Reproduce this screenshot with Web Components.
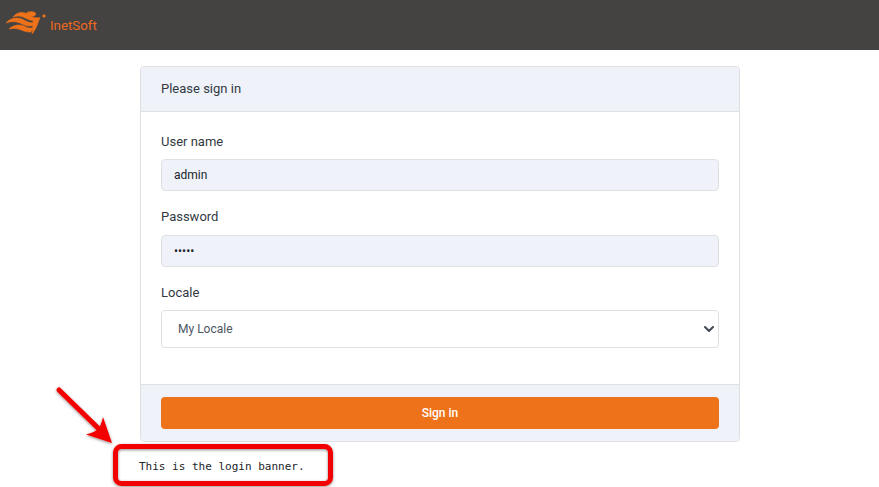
<!DOCTYPE html>
<html>
<head>
<meta charset="utf-8">
<title>Sign in</title>
<style>
  html, body { margin: 0; height: 100%; background: #fff; overflow: hidden; }
  body { font-family: Roboto, sans-serif; font-size: 13px; color: #212529; position: relative; }
</style>
</head>
<body>
<app-header></app-header>
<login-card>
  <form-field label="User name" type="text" value="admin"></form-field>
  <form-field label="Password" type="password" value="admin" style="--label-gap: 9px"></form-field>
  <locale-field label="Locale" value="My Locale"></locale-field>
</login-card>
<login-banner>This is the login banner.</login-banner>
<banner-callout></banner-callout>

<script>
class AppHeader extends HTMLElement {
    constructor() {
        super();
        this.attachShadow({ mode: 'open' });
        this.shadowRoot.innerHTML = `
            <style>
                :host {
                    display: flex;
                    align-items: center;
                    height: 50px;
                    background: #444341;
                    padding-left: 4px;
                    box-sizing: border-box;
                }
                svg { display: block; margin-top: -4px; }
                span {
                    margin-left: 3px;
                    color: #ee6a1f;
                    font-size: 13.3px;
                }
            </style>
            <svg width="43" height="26" viewBox="4 10 43 26">
                <g fill="#ee7219" stroke="#ee7219" stroke-width=".6">
                    <circle cx="44" cy="16" r="1.300"/>
                    <ellipse cx="31" cy="14" rx="4.700" ry="2.300"/>
                    <path d="M13 17C16 13 21 11.500 25 13C29 15 32 18 38 18L39 19.500C33 22 28 19.500 24 17.500C21 16 17 15.500 13 17z"/>
                    <path d="M6 23C10 18 17 17 22 19C26 21 30 24 35 22L33 25.500C28 27 24 25 20 23C16 21.500 11 21 6 23z"/>
                    <path d="M9 29C13 25 19 24 24 26C27 27.500 30 29 33 27.500L31 32C27 32.500 24 31 20 29.500C17 28.500 13 28 9 29z"/>
                    <path d="M33 19L40 17.500C38 22 37 28 32 34C33 29 33 24 33 19z"/>
                </g>
            </svg>
            <span>InetSoft</span>
        `;
    }
}

class LoginCard extends HTMLElement {
    constructor() {
        super();
        this.attachShadow({ mode: 'open' });
        this.shadowRoot.innerHTML = `
            <style>
                :host {
                    display: block;
                    width: 600px;
                    box-sizing: border-box;
                    margin: 16px 0 0 140px;
                    border: 1px solid #dfe0e2;
                    border-radius: 4px;
                    overflow: hidden;
                }
                .head {
                    height: 45px;
                    box-sizing: border-box;
                    padding: 0 20px 1px;
                    display: flex;
                    align-items: center;
                    background: #eff2f9;
                    border-bottom: 1px solid #dfe0e2;
                    color: #333a42;
                }
                .body {
                    height: 272px;
                    box-sizing: border-box;
                    padding: 19.500px 20px 0;
                    display: flex;
                    flex-direction: column;
                }
                .foot {
                    height: 57px;
                    box-sizing: border-box;
                    padding: 12px 20px 0;
                    background: #eff2f9;
                    border-top: 1px solid #dfe0e2;
                }
                button {
                    display: block;
                    width: 100%;
                    height: 32px;
                    border: 0;
                    border-radius: 4px;
                    background: #ee7219;
                    color: #fff;
                    font: 500 12px Roboto, sans-serif;
                    padding: 0;
                }
            </style>
            <div class="head">Please sign in</div>
            <div class="body"><slot></slot></div>
            <div class="foot"><button type="button">Sign in</button></div>
        `;
    }
}

class FormField extends HTMLElement {
    constructor() {
        super();
        this.attachShadow({ mode: 'open' });
    }

    connectedCallback() {
        const label = this.getAttribute('label');
        const type = this.getAttribute('type') || 'text';
        const value = this.getAttribute('value') || '';
        this.shadowRoot.innerHTML = `
            <style>
                :host { display: block; margin-bottom: 15.500px; }
                label {
                    display: block;
                    height: 19.500px;
                    line-height: 19.500px;
                    margin-bottom: var(--label-gap, 8px);
                    color: #333a42;
                }
                input {
                    display: block;
                    width: 100%;
                    height: 32px;
                    box-sizing: border-box;
                    padding: 0 12px;
                    background: #eff2f9;
                    border: 1px solid #dfe0e2;
                    border-radius: 4px;
                    color: #212529;
                    font: 12px Roboto, sans-serif;
                    outline: none;
                }
            </style>
            <label>${label}</label>
            <input type="${type}" value="${value}">
        `;
    }
}

class LocaleField extends HTMLElement {
    constructor() {
        super();
        this.attachShadow({ mode: 'open' });
    }

    connectedCallback() {
        this.shadowRoot.innerHTML = `
            <style>
                :host { display: block; }
                label {
                    display: block;
                    height: 19.500px;
                    line-height: 19.500px;
                    margin-bottom: 8px;
                    color: #333a42;
                }
                .select {
                    height: 38px;
                    box-sizing: border-box;
                    padding: 0 4px 0 16px;
                    display: flex;
                    align-items: center;
                    justify-content: space-between;
                    border: 1px solid #dfe0e2;
                    border-radius: 4px;
                    background: #fff;
                    color: #4e5661;
                    font-size: 12px;
                }
                svg { display: block; }
            </style>
            <label>${this.getAttribute('label')}</label>
            <div class="select">
                <span>${this.getAttribute('value')}</span>
                <svg width="10" height="6" viewBox="0 0 10 6">
                    <path d="M1 1l4 4 4-4" fill="none" stroke="#414a55" stroke-width="2" stroke-linecap="round" stroke-linejoin="round"/>
                </svg>
            </div>
        `;
    }
}

class LoginBanner extends HTMLElement {
    constructor() {
        super();
        this.attachShadow({ mode: 'open' });
        this.shadowRoot.innerHTML = `
            <style>
                :host {
                    display: block;
                    margin: 17px 0 0 139px;
                    font: 11px/16px "DejaVu Sans Mono", monospace;
                    color: #212529;
                }
            </style>
            <slot></slot>
        `;
    }
}

// red annotation drawn on top of the page
class BannerCallout extends HTMLElement {
    constructor() {
        super();
        this.attachShadow({ mode: 'open' });
        this.shadowRoot.innerHTML = `
            <style>
                :host { position: absolute; left: 0; top: 0; width: 879px; height: 487px; pointer-events: none; }
                svg { display: block; }
            </style>
            <svg width="879" height="487" viewBox="0 0 879 487">
                <defs>
                    <filter id="sh" x="-10%" y="-20%" width="120%" height="140%">
                        <feDropShadow dx="0" dy="1" stdDeviation="1.800" flood-color="#000" flood-opacity=".45"/>
                    </filter>
                </defs>
                <g filter="url(#sh)">
                    <rect x="115.500" y="446.500" width="215" height="37" rx="6" fill="none" stroke="#f30000" stroke-width="5"/>
                    <path d="M59 390L98 428" stroke="#f30000" stroke-width="5" stroke-linecap="round" fill="none"/>
                    <path d="M103 417L112 443L86 434.500Q95 432 98 429Q101 426 103 417z" fill="#f30000"/>
                </g>
            </svg>
        `;
    }
}

customElements.define('app-header', AppHeader);
customElements.define('login-card', LoginCard);
customElements.define('form-field', FormField);
customElements.define('locale-field', LocaleField);
customElements.define('login-banner', LoginBanner);
customElements.define('banner-callout', BannerCallout);
</script>
</body>
</html>
